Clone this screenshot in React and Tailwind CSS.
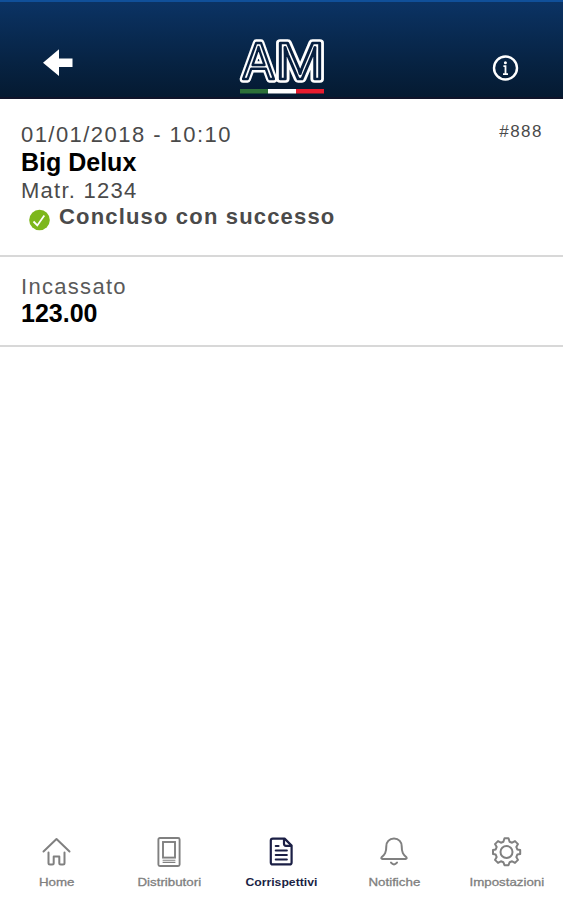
import React, { useState } from 'react';

const HomeIcon = () => (
  <svg width="30" height="30" viewBox="0 0 30 30" fill="none" stroke="currentColor" strokeWidth="2" strokeLinecap="round" strokeLinejoin="round">
    <path d="M2.5 14.5 L15.5 2 L28.5 14.5" />
    <path d="M7.5 15.5 V26 Q7.5 27.5 9 27.5 H11.2 Q12.7 27.5 12.7 26 V19.5 H18.3 V26 Q18.3 27.5 19.8 27.5 H22 Q23.5 27.5 23.5 26 V15.5" />
  </svg>
);

const MachineIcon = () => (
  <svg width="30" height="30" viewBox="0 0 30 30" fill="none" stroke="currentColor" strokeWidth="1.9">
    <rect x="4.4" y="1" width="21.2" height="28" rx="1.5" />
    <rect x="9" y="5" width="12" height="15.6" />
    <path d="M8.6 23.2 H21.4 M8.6 25.4 H21.4" strokeWidth="1.1" />
  </svg>
);

const ReceiptIcon = () => (
  <svg width="30" height="30" viewBox="0 0 30 30" fill="none" stroke="currentColor" strokeWidth="2.2" strokeLinejoin="round" strokeLinecap="round">
    <path d="M18.6 1.6 H6.8 Q4.8 1.6 4.8 3.6 V25.4 Q4.8 27.4 6.8 27.4 H23.6 Q25.6 27.4 25.6 25.4 V8.6 Z" />
    <path d="M18 2 V6.8 Q18 8.8 20 8.8 H25" />
    <path d="M9.8 9 H12.5 M9.8 13.5 H20.8 M9.8 18 H20.8 M9.8 22.5 H20.8" />
  </svg>
);

const BellIcon = () => (
  <svg width="30" height="30" viewBox="0 0 30 30" fill="none" stroke="currentColor" strokeWidth="2" strokeLinecap="round" strokeLinejoin="round">
    <path d="M15 1.6 C10 1.6 7.3 5.2 7.3 9.2 C7.3 15.7 5.8 17.5 2.6 20.2 Q1.7 21.8 3.4 22 H26.6 Q28.3 21.8 27.4 20.2 C24.2 17.5 22.7 15.7 22.7 9.2 C22.7 5.2 20 1.6 15 1.6 Z" />
    <path d="M12 25.6 Q15 29.2 18 25.6" />
  </svg>
);

const GearIcon = () => (
  <svg width="30" height="30" viewBox="0 0 30 30" fill="none" stroke="currentColor" strokeWidth="2" strokeLinejoin="round">
    <path d="M12.5 1.3 H16.5 L17.6 4.7 L20.1 5.7 L23 4.1 L26 7.1 L24.3 9.9 L25.3 12.4 L28.2 13 V17 L25.3 17.6 L24.3 20.1 L26 22.9 L23 25.9 L20.1 24.3 L17.6 25.3 L16.5 28.2 H12.5 L11.4 25.3 L8.9 24.3 L6 25.9 L3 22.9 L4.7 20.1 L3.7 17.6 L1 17 V13 L3.7 12.4 L4.7 9.9 L3 7.1 L6 4.1 L8.9 5.7 L11.4 4.7 Z" />
    <circle cx="14.5" cy="15" r="6" />
  </svg>
);

const tabs = [
  { id: 'home', label: 'Home', Icon: HomeIcon },
  { id: 'distributori', label: 'Distributori', Icon: MachineIcon },
  { id: 'corrispettivi', label: 'Corrispettivi', Icon: ReceiptIcon },
  { id: 'notifiche', label: 'Notifiche', Icon: BellIcon },
  { id: 'impostazioni', label: 'Impostazioni', Icon: GearIcon },
];

const Logo = () => (
  <svg width="96" height="72" viewBox="0 0 96 72">
    <g fontFamily="Liberation Sans" fontSize="51" strokeLinejoin="round" fill="#fff">
      {/* white outline, navy gap, thin white core */}
      <text x="9" y="54.5" textLength="31" lengthAdjust="spacingAndGlyphs" stroke="#fff" strokeWidth="7.4">A</text>
      <text x="9" y="54.5" textLength="31" lengthAdjust="spacingAndGlyphs" stroke="#082040" strokeWidth="2.6">A</text>
      <text x="41.5" y="54.5" textLength="49" lengthAdjust="spacingAndGlyphs" stroke="#fff" strokeWidth="7.4">M</text>
      <text x="41.5" y="54.5" textLength="49" lengthAdjust="spacingAndGlyphs" stroke="#082040" strokeWidth="2.6">M</text>
    </g>
    <rect x="6" y="65" width="28" height="4.5" fill="#2d7038" />
    <rect x="34" y="65" width="28" height="4.5" fill="#fff" />
    <rect x="62" y="65" width="28" height="4.5" fill="#e81c2e" />
  </svg>
);

const Header = () => (
  <header className="flex h-[97px] shrink-0 items-start justify-between border-b-2 border-[#10142a] bg-linear-to-b from-[#0b3364] to-[#051a31] pr-[44px] pl-[43px]">
    <button className="mt-[46px] w-[31px]">
      <svg width="31" height="30" viewBox="0 0 31 30">
        <path d="M0 14.7 L16 1.2 V10.5 H29.5 V19 H16 V28 Z" fill="#fff" />
      </svg>
    </button>
    <div className="mt-[22px] -ml-[3px]">
      <Logo />
    </div>
    <button className="mt-[52px] w-[27px]">
      <svg width="27" height="28" viewBox="0 0 27 28" fill="none" stroke="#fff">
        <circle cx="13.5" cy="14" r="11.5" strokeWidth="2.4" />
        <circle cx="13.4" cy="8.8" r="1.5" fill="#fff" stroke="none" />
        <path d="M11.4 12.2 H13.5 V20 M11 20.2 H16" strokeWidth="1.8" />
      </svg>
    </button>
  </header>
);

const App = () => {
  const [active, setActive] = useState('corrispettivi');

  return (
    <div className="flex h-[900px] w-[563px] flex-col overflow-hidden border-t-2 border-[#10509a] bg-white font-['Liberation_Sans',sans-serif]">
      <Header />

      <section className="flex h-[158px] shrink-0 justify-between border-b-2 border-[#d8d8d8] pt-[22px] pr-[20px] pl-[21px] text-[22px] text-[#4a4a4a]">
        <div>
          <div className="h-[27px] leading-[28px] tracking-[1.45px]">01/01/2018 - 10:10</div>
          <div className="h-[29px] text-[25px] leading-[28px] font-bold text-black">Big Delux</div>
          <div className="h-[28px] leading-[28px] tracking-[1.25px]">Matr. 1234</div>
          <div className="flex h-[26px] items-start pl-[8px]">
            <svg className="mt-[4px]" width="21" height="22" viewBox="0 0 21 22">
              <circle cx="10.5" cy="11" r="10.3" fill="#7db71c" />
              <path d="M4.5 12.5 L8.3 16.4 L15.3 6.5" fill="none" stroke="#fff" strokeWidth="1.8" />
            </svg>
            <span className="ml-[9px] leading-[24px] font-bold tracking-[1.17px]">Concluso con successo</span>
          </div>
        </div>
        <div className="text-[17px] leading-[22px] tracking-[1.5px]">#888</div>
      </section>

      <section className="h-[90px] shrink-0 border-b-2 border-[#d8d8d8] pt-[16px] pl-[21px] text-[22px] text-[#5a5a5a]">
        <div className="h-[26px] leading-[27px] tracking-[1.3px]">Incassato</div>
        <div className="h-[28px] text-[25px] leading-[28px] font-bold text-black">123.00</div>
      </section>

      <main className="flex-1" />

      <nav className="grid h-[76px] shrink-0 grid-cols-5">
        {tabs.map(({ id, label, Icon }) => (
          <button
            key={id}
            onClick={() => setActive(id)}
            className={`flex flex-col items-center pt-[13px] ${
              active === id ? 'text-[#1b1f45]' : 'text-[#808080]'
            }`}
          >
            <Icon />
            <span
              className={`mt-[8px] text-[11px] leading-[14px] ${
                active === id ? 'scale-x-[1.11] font-bold' : 'scale-x-[1.21] [-webkit-text-stroke:0.3px_#808080]'
              }`}
            >
              {label}
            </span>
          </button>
        ))}
      </nav>
    </div>
  );
};

export default App;
